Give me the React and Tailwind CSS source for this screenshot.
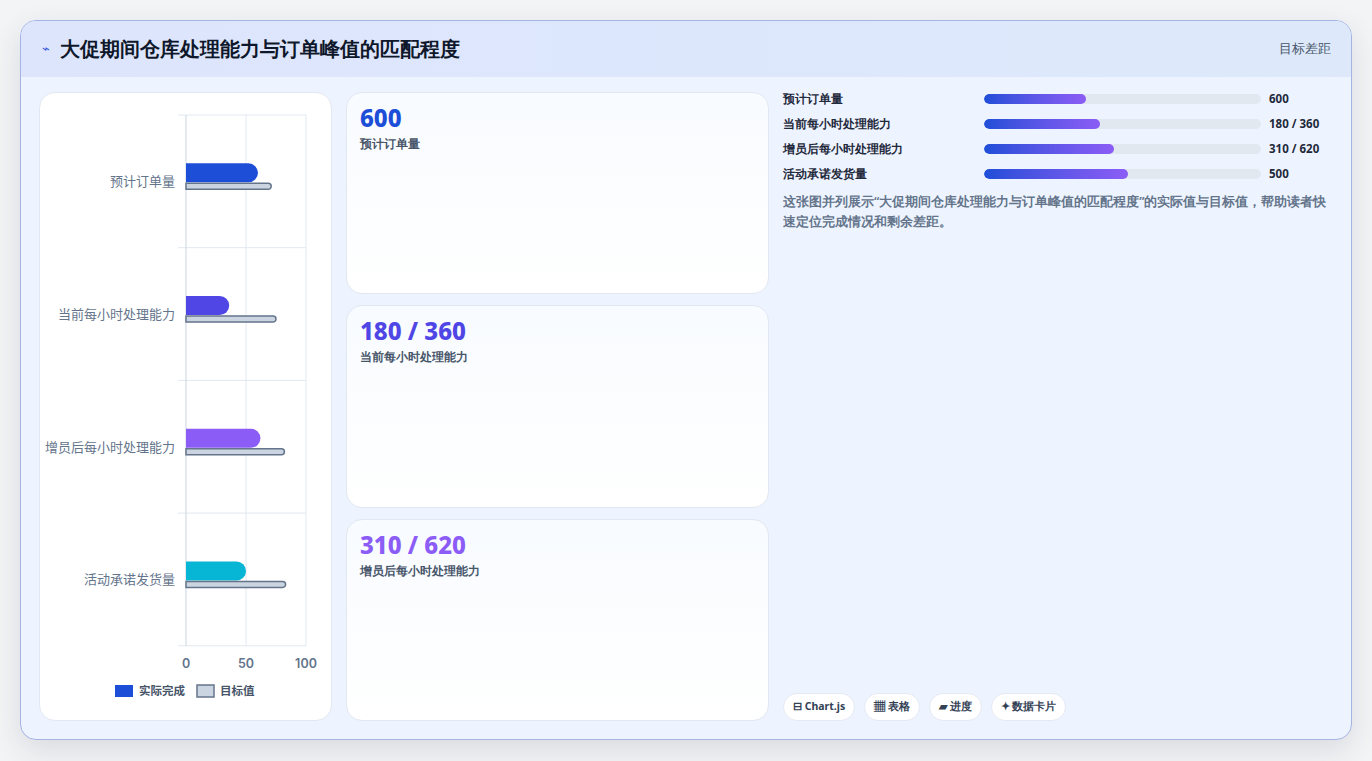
import React from "react";

const rows = [
  { label: "预计订单量", a: 60, t: 71, c: "#1d4ed8" },
  { label: "当前每小时处理能力", a: 36, t: 75, c: "#4f46e5" },
  { label: "增员后每小时处理能力", a: 62, t: 82, c: "#8b5cf6" },
  { label: "活动承诺发货量", a: 50, t: 83, c: "#06b6d4" },
];

function Chart() {
  const x0 = 146, w = 120, top = 22, rh = 132.7;
  return (
    <svg width="292" height="627" className="block" style={{ fontFamily: "Inter, 'Noto Sans CJK SC', sans-serif" }}>
      {[0, 1, 2, 3, 4].map((i) => (
        <line key={i} x1={x0 - 8} x2={x0 + w} y1={top + i * rh} y2={top + i * rh} stroke="#e2e8f0" />
      ))}
      {[0, 50, 100].map((v) => (
        <line key={v} x1={x0 + (v * w) / 100} x2={x0 + (v * w) / 100} y1={top} y2={top + 4 * rh} stroke={v === 0 ? "#cbd5e1" : "#e2e8f0"} />
      ))}
      {rows.map((r, i) => {
        const cy = top + i * rh + rh / 2;
        const aw = (r.a * w) / 100, tw = (r.t * w) / 100;
        return (
          <g key={i}>
            <path d={`M${x0} ${cy - 18} H${x0 + aw - 9.5} A9.5 9.5 0 0 1 ${x0 + aw - 9.5} ${cy + 1} H${x0} Z`} fill={r.c} />
            <path d={`M${x0} ${cy + 2} H${x0 + tw - 3} A3 3 0 0 1 ${x0 + tw - 3} ${cy + 8} H${x0} Z`} fill="#cbd5e1" stroke="#64748b" strokeWidth="1.5" />
            <text x={x0 - 11} y={cy + 5} textAnchor="end" fontSize="13" fill="#64748b">{r.label}</text>
          </g>
        );
      })}
      {[0, 50, 100].map((v) => (
        <text key={v} x={x0 + (v * w) / 100} y={top + 4 * rh + 22} textAnchor="middle" fontSize="12.5" fontWeight="600" fill="#64748b">{v}</text>
      ))}
      <rect x="75" y="592" width="18" height="12" fill="#1d4ed8" />
      <text x="99" y="602" fontSize="11.5" fontWeight="600" fill="#475569">实际完成</text>
      <rect x="157" y="592" width="17" height="12" fill="#cbd5e1" stroke="#64748b" strokeWidth="1.5" />
      <text x="180" y="602" fontSize="11.5" fontWeight="600" fill="#475569">目标值</text>
    </svg>
  );
}

const stats = [
  { v: "600", l: "预计订单量", c: "text-[#1d4ed8]" },
  { v: "180 / 360", l: "当前每小时处理能力", c: "text-[#4f46e5]" },
  { v: "310 / 620", l: "增员后每小时处理能力", c: "text-[#8b5cf6]" },
];

const prog = [
  { l: "预计订单量", p: 37, v: "600" },
  { l: "当前每小时处理能力", p: 42, v: "180 / 360" },
  { l: "增员后每小时处理能力", p: 47, v: "310 / 620" },
  { l: "活动承诺发货量", p: 52, v: "500" },
];

export default function App() {
  return (
    <div className="w-[1372px] h-[761px] bg-[#f3f4f6] pt-5 pl-5 font-['Inter','Noto_Sans_CJK_SC',sans-serif]">
      <div className="w-[1332px] h-[720px] rounded-2xl border border-[#a5b4e4] bg-[#eef4ff] overflow-hidden shadow-[0_10px_30px_rgba(30,41,59,0.12)] flex flex-col">
        <div className="h-[56px] shrink-0 bg-gradient-to-r from-[#dde5fd] to-[#dde9fb] flex items-center justify-between pl-[21px] pr-[20px]">
          <div className="flex items-center gap-[10px]">
            <span className="text-[#3b5bdb] text-[13px]">⌁</span>
            <span className="text-[20px] font-bold text-[#0f172a]">大促期间仓库处理能力与订单峰值的匹配程度</span>
          </div>
          <span className="text-[12.5px] text-[#475569] font-medium">目标差距</span>
        </div>
        <div className="flex-1 flex gap-[14px] pl-[18px] pr-[19px] pt-[15px] pb-[19px]">
          <div className="w-[293px] shrink-0 bg-white rounded-2xl border border-[#e2e8f0] overflow-hidden">
            <Chart />
          </div>
          <div className="w-[423px] shrink-0 flex flex-col gap-[11px]">
            {stats.map((s) => (
              <div key={s.v} className="flex-1 rounded-2xl border border-[#e2e8f0] bg-gradient-to-b from-[#f8fbff] to-white px-[13px] pt-[11px]">
                <div className={`text-[24px] font-extrabold leading-[28px] ${s.c}`}>{s.v}</div>
                <div className="text-[11.5px] font-semibold text-[#475569] mt-[3px]">{s.l}</div>
              </div>
            ))}
          </div>
          <div className="flex-1 flex flex-col pr-[1px]">
            <div className="flex flex-col gap-[7px] -mt-[2px]">
              {prog.map((r) => (
                <div key={r.l} className="flex items-center h-[18px]">
                  <span className="w-[201px] text-[11.5px] font-semibold text-[#1e293b]">{r.l}</span>
                  <div className="w-[277px] h-[10px] rounded-full bg-[#e2e8f0] overflow-hidden">
                    <div className="h-full rounded-full bg-gradient-to-r from-[#1d4ed8] to-[#8b5cf6]" style={{ width: r.p + "%" }} />
                  </div>
                  <span className="ml-[8px] text-[11.5px] font-bold text-[#1e293b]">{r.v}</span>
                </div>
              ))}
            </div>
            <p className="mt-[9px] text-[12.5px] leading-[20px] font-semibold text-[#64748b]">
              这张图并列展示“大促期间仓库处理能力与订单峰值的匹配程度”的实际值与目标值，帮助读者快速定位完成情况和剩余差距。
            </p>
            <div className="mt-auto flex gap-[9px]">
              {["⊟ Chart.js", "▦ 表格", "▰ 进度", "✦ 数据卡片"].map((t) => (
                <span key={t} className="h-[28px] px-[9px] flex items-center rounded-full bg-white border border-[#e5e9f2] text-[10.5px] font-bold text-[#334155]">{t}</span>
              ))}
            </div>
          </div>
        </div>
      </div>
    </div>
  );
}
